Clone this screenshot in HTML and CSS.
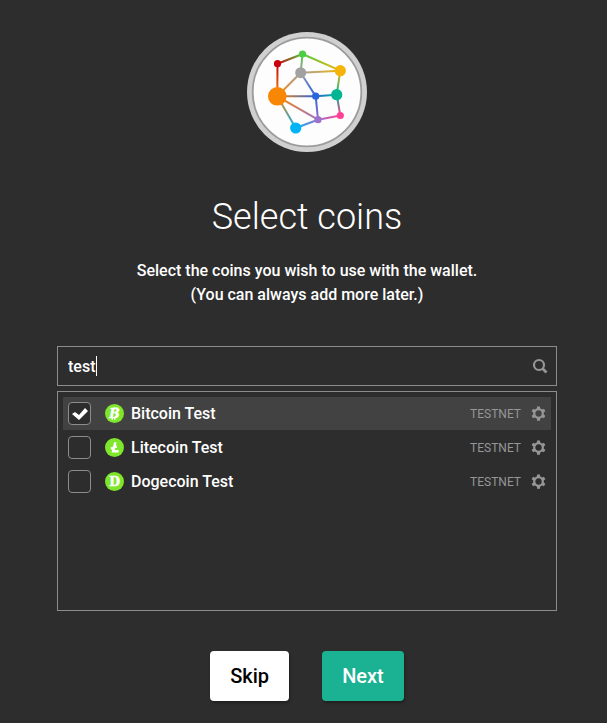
FILE: index.html
```html
<!DOCTYPE html>
<html lang="en">
<head>
  <meta charset="utf-8">
  <meta name="viewport" content="width=device-width, initial-scale=1">
  <title>Select coins</title>
  <link rel="stylesheet" href="styles.css">
</head>
<body>

  <!-- Shapes shared by the coin rows -->
  <svg class="sprite" aria-hidden="true">
    <symbol id="gear" viewBox="0 0 16 16">
      <g fill="none" stroke="currentColor">
        <circle cx="8" cy="8" r="4.6" stroke-width="2.4"/>
        <path d="M8 .4V4M8 12V15.6M1.4 4.2 4.5 6M11.5 10 14.6 11.8M1.4 11.8 4.5 10M11.5 6 14.6 4.2" stroke-width="3.2"/>
      </g>
    </symbol>
  </svg>

  <main class="wizard">
    <svg class="logo" viewBox="0 0 120 120" role="img" aria-label="Wallet logo">
      <defs>
        <linearGradient id="e1" gradientUnits="userSpaceOnUse" x1="30.5" y1="31.7" x2="55.5" y2="22"><stop stop-color="#c9000c"/><stop offset="1" stop-color="#4ccd42"/></linearGradient>
        <linearGradient id="e2" gradientUnits="userSpaceOnUse" x1="55.5" y1="22" x2="93.3" y2="38.7"><stop stop-color="#4ccd42"/><stop offset="1" stop-color="#f5b40a"/></linearGradient>
        <linearGradient id="e3" gradientUnits="userSpaceOnUse" x1="55.5" y1="22" x2="53.7" y2="40.7"><stop stop-color="#4ccd42"/><stop offset="1" stop-color="#a1a1a1"/></linearGradient>
        <linearGradient id="e4" gradientUnits="userSpaceOnUse" x1="30.5" y1="31.7" x2="30.3" y2="64.3"><stop stop-color="#c9000c"/><stop offset="1" stop-color="#f98706"/></linearGradient>
        <linearGradient id="e5" gradientUnits="userSpaceOnUse" x1="53.7" y1="40.7" x2="93.3" y2="38.7"><stop stop-color="#a1a1a1"/><stop offset="1" stop-color="#f5b40a"/></linearGradient>
        <linearGradient id="e6" gradientUnits="userSpaceOnUse" x1="53.7" y1="40.7" x2="30.3" y2="64.3"><stop stop-color="#a1a1a1"/><stop offset="1" stop-color="#f98706"/></linearGradient>
        <linearGradient id="e7" gradientUnits="userSpaceOnUse" x1="53.7" y1="40.7" x2="68.7" y2="64.2"><stop stop-color="#a1a1a1"/><stop offset=".6" stop-color="#4f73d0"/><stop offset="1" stop-color="#2966dc"/></linearGradient>
        <linearGradient id="e8" gradientUnits="userSpaceOnUse" x1="30.3" y1="64.3" x2="68.7" y2="64.2"><stop stop-color="#f98706"/><stop offset="1" stop-color="#2966dc"/></linearGradient>
        <linearGradient id="e9" gradientUnits="userSpaceOnUse" x1="30.3" y1="64.3" x2="71" y2="87.7"><stop stop-color="#f98706"/><stop offset="1" stop-color="#9b72cc"/></linearGradient>
        <linearGradient id="e10" gradientUnits="userSpaceOnUse" x1="30.3" y1="64.3" x2="48.7" y2="96"><stop stop-color="#f98706"/><stop offset="1" stop-color="#00b3f5"/></linearGradient>
        <linearGradient id="e11" gradientUnits="userSpaceOnUse" x1="68.7" y1="64.2" x2="89.7" y2="62.7"><stop stop-color="#2966dc"/><stop offset="1" stop-color="#00b592"/></linearGradient>
        <linearGradient id="e12" gradientUnits="userSpaceOnUse" x1="68.7" y1="64.2" x2="71" y2="87.7"><stop stop-color="#2966dc"/><stop offset="1" stop-color="#9b72cc"/></linearGradient>
        <linearGradient id="e13" gradientUnits="userSpaceOnUse" x1="93.3" y1="38.7" x2="89.7" y2="62.7"><stop stop-color="#f5b40a"/><stop offset="1" stop-color="#00b592"/></linearGradient>
        <linearGradient id="e14" gradientUnits="userSpaceOnUse" x1="89.7" y1="62.7" x2="93.3" y2="83.5"><stop stop-color="#00b592"/><stop offset="1" stop-color="#ff4196"/></linearGradient>
        <linearGradient id="e15" gradientUnits="userSpaceOnUse" x1="71" y1="87.7" x2="93.3" y2="83.5"><stop stop-color="#9b72cc"/><stop offset="1" stop-color="#ff4196"/></linearGradient>
        <linearGradient id="e16" gradientUnits="userSpaceOnUse" x1="48.7" y1="96" x2="71" y2="87.7"><stop stop-color="#00b3f5"/><stop offset="1" stop-color="#9b72cc"/></linearGradient>
      </defs>
      <circle cx="60" cy="60" r="60" fill="#d0d0d0"/>
      <circle cx="60" cy="60" r="54.3" fill="#fdfdfd" stroke="#9c9c9c" stroke-width="1.8"/>
      <g stroke-width="2">
        <path stroke="url(#e1)" d="M30.5 31.7 55.5 22"/>
        <path stroke="url(#e2)" d="M55.5 22 93.3 38.7"/>
        <path stroke="url(#e3)" d="M55.5 22 53.7 40.7"/>
        <path stroke="url(#e4)" d="M30.5 31.7 30.3 64.3"/>
        <path stroke="url(#e5)" d="M53.7 40.7 93.3 38.7"/>
        <path stroke="url(#e6)" d="M53.7 40.7 30.3 64.3"/>
        <path stroke="url(#e7)" d="M53.7 40.7 68.7 64.2"/>
        <path stroke="url(#e8)" d="M30.3 64.3 68.7 64.2"/>
        <path stroke="url(#e9)" d="M30.3 64.3 71 87.7"/>
        <path stroke="url(#e10)" d="M30.3 64.3 48.7 96"/>
        <path stroke="url(#e11)" d="M68.7 64.2 89.7 62.7"/>
        <path stroke="url(#e12)" d="M68.7 64.2 71 87.7"/>
        <path stroke="url(#e13)" d="M93.3 38.7 89.7 62.7"/>
        <path stroke="url(#e14)" d="M89.7 62.7 93.3 83.5"/>
        <path stroke="url(#e15)" d="M71 87.7 93.3 83.5"/>
        <path stroke="url(#e16)" d="M48.7 96 71 87.7"/>
      </g>
      <circle cx="30.5" cy="31.7" r="3.6" fill="#c9000c"/>
      <circle cx="55.5" cy="22" r="3.6" fill="#4ccd42"/>
      <circle cx="53.7" cy="40.7" r="5.5" fill="#a1a1a1"/>
      <circle cx="93.3" cy="38.7" r="5.6" fill="#f5b40a"/>
      <circle cx="30.3" cy="64.3" r="9.3" fill="#f98706"/>
      <circle cx="68.7" cy="64.2" r="3.6" fill="#2966dc"/>
      <circle cx="89.7" cy="62.7" r="5.6" fill="#00b592"/>
      <circle cx="71" cy="87.7" r="3.6" fill="#9b72cc"/>
      <circle cx="93.3" cy="83.5" r="3.6" fill="#ff4196"/>
      <circle cx="48.7" cy="96" r="5.6" fill="#00b3f5"/>
    </svg>

    <h1>Select coins</h1>
    <p class="intro">Select the coins you wish to use with the wallet.<br>(You can always add more later.)</p>

    <div class="search">
      <input class="search-input" type="text" value="test" aria-label="Search coins">
      <span class="caret"></span>
      <svg class="search-icon" viewBox="0 0 16 16" aria-hidden="true">
        <circle cx="7" cy="7" r="5" fill="none" stroke="currentColor" stroke-width="2.2"/>
        <path d="M10.5 10.5 14.5 14.5" stroke="currentColor" stroke-width="2.6"/>
      </svg>
    </div>

    <ul class="coins">
      <li class="coin selected">
        <input class="tick" type="checkbox" id="btc" checked>
        <label class="coin-name" for="btc">
          <svg class="coin-icon" viewBox="0 0 20 20" aria-hidden="true">
            <circle cx="10" cy="10" r="10" fill="#7ee62b"/>
            <text class="glyph slanted" x="10" y="14.6">B</text>
            <path d="M9.6 5.8 10.1 3.4M12.2 5.8 12.7 3.4M7.5 16.8 8 14.2M10.1 16.8 10.6 14.2" stroke="#fff" stroke-width="1.4"/>
          </svg>
          Bitcoin Test
        </label>
        <span class="network">TESTNET</span>
        <button class="settings" type="button" aria-label="Bitcoin Test settings"><svg><use href="#gear"/></svg></button>
      </li>
      <li class="coin">
        <input class="tick" type="checkbox" id="ltc">
        <label class="coin-name" for="ltc">
          <svg class="coin-icon" viewBox="0 0 20 20" aria-hidden="true">
            <circle cx="10" cy="10" r="10" fill="#7ee62b"/>
            <path d="M10.9 4.5 8.6 13.9H14.4M6.2 11.2 12.4 8.8" fill="none" stroke="#fff" stroke-width="2.6"/>
          </svg>
          Litecoin Test
        </label>
        <span class="network">TESTNET</span>
        <button class="settings" type="button" aria-label="Litecoin Test settings"><svg><use href="#gear"/></svg></button>
      </li>
      <li class="coin">
        <input class="tick" type="checkbox" id="doge">
        <label class="coin-name" for="doge">
          <svg class="coin-icon" viewBox="0 0 20 20" aria-hidden="true">
            <circle cx="10" cy="10" r="10" fill="#7ee62b"/>
            <text class="glyph" x="10.2" y="14.8">D</text>
          </svg>
          Dogecoin Test
        </label>
        <span class="network">TESTNET</span>
        <button class="settings" type="button" aria-label="Dogecoin Test settings"><svg><use href="#gear"/></svg></button>
      </li>
    </ul>

    <div class="actions">
      <button class="btn" type="button">Skip</button>
      <button class="btn primary" type="button">Next</button>
    </div>
  </main>

</body>
</html>
```
FILE: styles.css
```css
* {
  box-sizing: border-box;
}

body {
  margin: 0;
  padding: 32px 50px 22px 57px;
  background: #2d2d2d;
  color: #fff;
  font-family: Roboto, "Liberation Sans", sans-serif;
  font-size: 16px;
  font-weight: 500;
  line-height: 24px;
}

.sprite {
  position: absolute;
  width: 0;
  height: 0;
}

.wizard {
  display: flex;
  flex-direction: column;
  align-items: center;
  max-width: 500px;
  margin: 0 auto;
}

.logo {
  width: 120px;
  height: 120px;
}

h1 {
  margin: 41px 0 18px;
  font-size: 36px;
  font-weight: 300;
  line-height: 48px;
}

.intro {
  margin: 0 0 39px;
  text-align: center;
}

.search {
  position: relative;
  width: 100%;
  margin-bottom: 5px;
}

.search-input {
  display: block;
  width: 100%;
  height: 40px;
  padding: 0 40px 0 10px;
  border: 1px solid #8c8c8c;
  border-radius: 0;
  outline: none;
  background: transparent;
  color: inherit;
  font: inherit;
}

.caret {
  position: absolute;
  top: 10px;
  left: 39px;
  width: 1px;
  height: 20px;
  background: #fff;
}

.search-icon {
  position: absolute;
  top: 12px;
  right: 9px;
  width: 16px;
  height: 16px;
  color: #969696;
}

.coins {
  display: flex;
  flex-direction: column;
  gap: 1px;
  width: 100%;
  min-height: 220px;
  margin: 0 0 40px;
  padding: 5px;
  border: 1px solid #8c8c8c;
  list-style: none;
}

.coin {
  display: flex;
  align-items: center;
  height: 33px;
  padding: 0 5px;
}

.selected {
  background: #424242;
}

.tick {
  appearance: none;
  width: 23px;
  height: 23px;
  margin: 0 14px 0 0;
  border: 1px solid #8c8c8c;
  border-radius: 4px;
  background: #2d2d2d;
}

.tick:checked::before {
  content: "";
  display: block;
  width: 21px;
  height: 21px;
  background: #fff;
  clip-path: polygon(3px 11px, 6px 9px, 10px 12px, 16px 5px, 19px 8px, 10px 17px);
}

.coin-name {
  display: flex;
  flex: 1;
  align-items: center;
  gap: 7px;
}

.coin-icon {
  width: 19px;
  height: 19px;
}

.glyph {
  fill: #fff;
  stroke: #fff;
  stroke-width: 0.5px;
  font-family: "DejaVu Serif", serif;
  font-size: 13px;
  font-weight: 700;
  text-anchor: middle;
}

.slanted {
  font-style: italic;
}

.network {
  color: #969696;
  font-size: 12px;
  font-weight: 400;
}

.settings {
  width: 15px;
  height: 17px;
  margin-left: 10px;
  padding: 0;
  border: 0;
  background: none;
  color: #969696;
  cursor: pointer;
}

.settings svg {
  display: block;
  width: 15px;
  height: 15px;
}

.actions {
  display: flex;
  gap: 33px;
}

.btn {
  height: 50px;
  padding: 0 20px;
  border: 0;
  border-radius: 4px;
  background: #fff;
  box-shadow: 1px 2px 3px rgba(0, 0, 0, 0.3);
  color: #000;
  font: inherit;
  font-size: 20px;
  cursor: pointer;
}

.primary {
  background: #1bb193;
  color: #fff;
}
```
